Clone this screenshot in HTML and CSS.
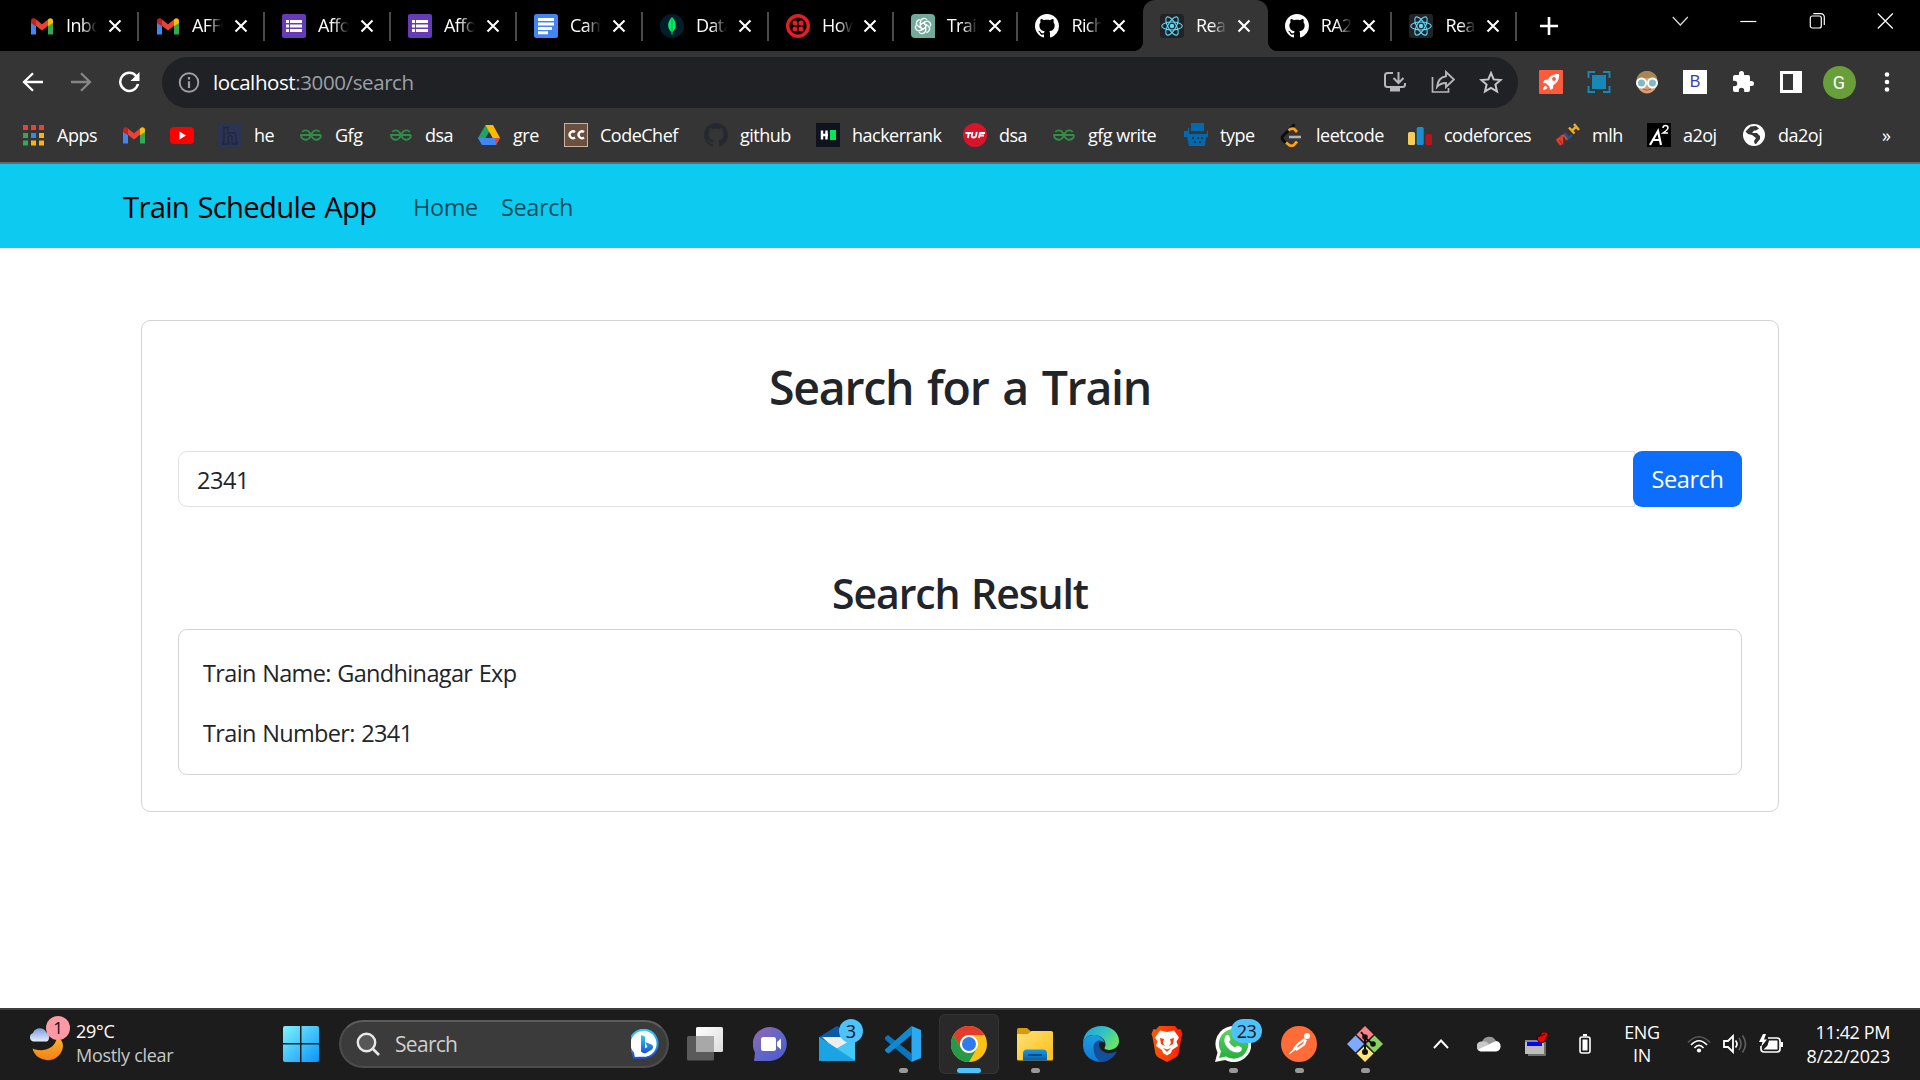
FILE: index.html
```html
<!DOCTYPE html>
<html lang="en">
<head>
<meta charset="utf-8">
<title>React App</title>
<link rel="stylesheet" href="styles.css">
</head>
<body>
<svg class="defs" width="0" height="0">
  <defs>
    <linearGradient id="gStart" x1="0" y1="0" x2="1" y2="1"><stop offset="0" stop-color="#7ef3ff"/><stop offset="1" stop-color="#0a94f8"/></linearGradient>
    <linearGradient id="gMoon" x1="0" y1="0" x2="0" y2="1"><stop offset="0" stop-color="#f9b52a"/><stop offset="1" stop-color="#f08018"/></linearGradient>
    <linearGradient id="gCloud" x1="0" y1="0" x2="0" y2="1"><stop offset="0" stop-color="#7d9bdc"/><stop offset="1" stop-color="#e6edfc"/></linearGradient>
    <linearGradient id="gBing" x1="0" y1="0" x2="0" y2="1"><stop offset="0" stop-color="#2bd0f0"/><stop offset="1" stop-color="#1c50d8"/></linearGradient>
    <linearGradient id="gChat" x1="0" y1="0" x2="1" y2="1"><stop offset="0" stop-color="#9a67ac"/><stop offset=".5" stop-color="#6266c6"/><stop offset="1" stop-color="#4f5ad0"/></linearGradient>
    <linearGradient id="gMail" x1="0" y1="0" x2="1" y2="1"><stop offset="0" stop-color="#2fb5ee"/><stop offset="1" stop-color="#1499e0"/></linearGradient>
    <linearGradient id="gFolder" x1="0" y1="0" x2="1" y2="1"><stop offset="0" stop-color="#ffe07a"/><stop offset="1" stop-color="#fdbf10"/></linearGradient>
    <linearGradient id="gTray" x1="0" y1="0" x2="0" y2="1"><stop offset="0" stop-color="#159be8"/><stop offset="1" stop-color="#0a5cab"/></linearGradient>
    <linearGradient id="gEdgeTop" x1="0" y1="0" x2="1" y2=".5"><stop offset="0" stop-color="#1ea0dc"/><stop offset=".55" stop-color="#31c2c6"/><stop offset="1" stop-color="#66e36a"/></linearGradient>
    <linearGradient id="gEdgeMid" x1="0" y1="0" x2="0" y2="1"><stop offset="0" stop-color="#1b9de2"/><stop offset="1" stop-color="#0f78d6"/></linearGradient>
    <linearGradient id="gBrave" x1="0" y1="0" x2="1" y2="0"><stop offset="0" stop-color="#ff5a08"/><stop offset="1" stop-color="#ff1e00"/></linearGradient>
    <linearGradient id="gWa" x1="0" y1="0" x2="0" y2="1"><stop offset="0" stop-color="#5fd267"/><stop offset="1" stop-color="#27ae3f"/></linearGradient>
    <linearGradient id="gPane" x1="0" y1="0" x2="1" y2="1"><stop offset="0" stop-color="#ffffff"/><stop offset="1" stop-color="#dcdcdc"/></linearGradient>
  </defs>
  <symbol id="gmail" viewBox="0 0 24 24">
    <path fill="#4285f4" d="M1 20.500V8l5 3.800V20.500z"/><path fill="#34a853" d="M18 20.500v-8.700L23 8v12.500z"/>
    <path fill="#ea4335" d="M6 5.500l6 4.700 6-4.700v6.300l-6 4.700-6-4.700z"/>
    <path fill="#fbbc04" d="M18 5.500c2.200-2.200 5-1 5 1.500v2l-5 3.300z"/><path fill="#c5221f" d="M6 5.500C3.800 3.300 1 4.500 1 7v2l5 3.300z"/>
  </symbol>
  <symbol id="forms" viewBox="0 0 24 24">
    <rect width="24" height="24" rx="2" fill="#673ab7"/>
    <g fill="#fff"><rect x="4" y="6" width="3" height="3"/><rect x="8" y="6" width="12" height="3"/><rect x="4" y="10.500" width="3" height="3"/><rect x="8" y="10.500" width="12" height="3"/><rect x="4" y="15" width="3" height="3"/><rect x="8" y="15" width="12" height="3"/></g>
  </symbol>
  <symbol id="docs" viewBox="0 0 24 24">
    <rect width="24" height="24" rx="2.500" fill="#4285f4"/><path fill="#fff" d="M4 4h16v3H4zM4 8.500h16v3H4zM4 13h14v3H4zM4 17.300h10v3H4z"/>
  </symbol>
  <symbol id="mongo" viewBox="0 0 24 24">
    <circle cx="12" cy="12" r="12" fill="#001e2b"/><path fill="#00ed64" d="M12 3c5 5 5 11 .5 15v2.500h-1V18C7 14 7 8 12 3z"/><path stroke="#0a9a48" stroke-width=".8" d="M12 5v13"/>
  </symbol>
  <symbol id="twilio" viewBox="0 0 24 24">
    <circle cx="12" cy="12" r="10.300" fill="#0a0000" stroke="#e31e26" stroke-width="3.400"/><g fill="#e31e26"><circle cx="9" cy="9" r="2.500"/><circle cx="15" cy="9" r="2.500"/><circle cx="9" cy="15" r="2.500"/><circle cx="15" cy="15" r="2.500"/></g>
  </symbol>
  <symbol id="gpt" viewBox="0 0 24 24">
    <path d="M4 0h16a4 4 0 0 1 4 4v20H4a4 4 0 0 1-4-4V4a4 4 0 0 1 4-4z" fill="#74aa9c"/>
    <g fill="none" stroke="#fff" stroke-width="1.300"><path id="gptp" d="M9.400 13.500V8a3.600 3.600 0 0 1 6.600-2M9.400 10.500l4.900-2.900"/><use href="#gptp" transform="rotate(60 12 12)"/><use href="#gptp" transform="rotate(120 12 12)"/><use href="#gptp" transform="rotate(180 12 12)"/><use href="#gptp" transform="rotate(240 12 12)"/><use href="#gptp" transform="rotate(300 12 12)"/></g>
  </symbol>
  <symbol id="github" viewBox="0 0 16 16">
    <path fill="currentColor" d="M8 0C3.580 0 0 3.580 0 8c0 3.540 2.290 6.530 5.470 7.590.4.070.55-.17.55-.38 0-.19-.01-.82-.01-1.490-2.010.37-2.530-.49-2.690-.94-.09-.23-.48-.94-.82-1.130-.28-.15-.68-.52-.01-.53.630-.01 1.080.58 1.230.82.72 1.210 1.870.87 2.330.66.07-.52.28-.87.51-1.070-1.780-.2-3.640-.89-3.640-3.950 0-.87.31-1.590.82-2.150-.08-.2-.36-1.020.08-2.120 0 0 .67-.21 2.200.82.64-.18 1.320-.27 2-.27s1.360.09 2 .27c1.530-1.040 2.200-.82 2.200-.82.44 1.100.16 1.920.08 2.120.51.56.82 1.270.82 2.150 0 3.070-1.870 3.750-3.650 3.950.29.25.54.73.54 1.480 0 1.070-.01 1.930-.01 2.200 0 .21.15.46.55.38A8.010 8.010 0 0 0 16 8c0-4.420-3.580-8-8-8z"/>
  </symbol>
  <symbol id="react" viewBox="0 0 24 24">
    <rect width="24" height="24" rx="3" fill="#222326"/><circle cx="12" cy="12" r="2.200" fill="#61dafb"/>
    <g fill="none" stroke="#61dafb" stroke-width="1.100"><ellipse cx="12" cy="12" rx="10.300" ry="4"/><ellipse cx="12" cy="12" rx="10.300" ry="4" transform="rotate(60 12 12)"/><ellipse cx="12" cy="12" rx="10.300" ry="4" transform="rotate(120 12 12)"/></g>
  </symbol>
  <symbol id="x" viewBox="0 0 14 14"><path d="M1.500 1.500l11 11M12.500 1.500l-11 11" stroke="#fff" stroke-width="2.100" fill="none"/></symbol>
  <symbol id="gfg" viewBox="0 0 24 24">
    <g fill="none" stroke="#2f8d46" stroke-width="1.900"><path d="M3.300 8.800a4.700 4.700 0 1 1-1.300 3.200H22M20.700 8.800a4.700 4.700 0 1 0 1.300 3.200"/></g>
  </symbol>
</svg>

<header class="browser">
  <div class="tabstrip">
    <div class="tab"><svg class="fav"><use href="#gmail"/></svg><span class="tab-title">Inbox</span><svg class="tab-x"><use href="#x"/></svg></div>
    <div class="tab"><svg class="fav"><use href="#gmail"/></svg><span class="tab-title">AFFO</span><svg class="tab-x"><use href="#x"/></svg></div>
    <div class="tab"><svg class="fav"><use href="#forms"/></svg><span class="tab-title">Affor</span><svg class="tab-x"><use href="#x"/></svg></div>
    <div class="tab"><svg class="fav"><use href="#forms"/></svg><span class="tab-title">Affor</span><svg class="tab-x"><use href="#x"/></svg></div>
    <div class="tab"><svg class="fav"><use href="#docs"/></svg><span class="tab-title">Camp</span><svg class="tab-x"><use href="#x"/></svg></div>
    <div class="tab"><svg class="fav"><use href="#mongo"/></svg><span class="tab-title">Data</span><svg class="tab-x"><use href="#x"/></svg></div>
    <div class="tab slim"><svg class="fav"><use href="#twilio"/></svg><span class="tab-title">How</span><svg class="tab-x"><use href="#x"/></svg></div>
    <div class="tab slim"><svg class="fav"><use href="#gpt"/></svg><span class="tab-title">Train</span><svg class="tab-x"><use href="#x"/></svg></div>
    <div class="tab slim plain"><svg class="fav"><use href="#github"/></svg><span class="tab-title">Rich</span><svg class="tab-x"><use href="#x"/></svg></div>
    <div class="tab slim plain active"><svg class="fav"><use href="#react"/></svg><span class="tab-title">Reac</span><svg class="tab-x"><use href="#x"/></svg></div>
    <div class="tab slim"><svg class="fav"><use href="#github"/></svg><span class="tab-title">RA20</span><svg class="tab-x"><use href="#x"/></svg></div>
    <div class="tab slim"><svg class="fav"><use href="#react"/></svg><span class="tab-title">Reac</span><svg class="tab-x"><use href="#x"/></svg></div>
    <div class="new-tab"><svg width="18" height="18" viewBox="0 0 18 18"><path d="M9 0v18M0 9h18" stroke="#fff" stroke-width="2.600"/></svg></div>
    <div class="window-buttons">
      <svg width="16" height="18" viewBox="0 0 16 18"><path d="M.5 5l7.500 8 7.500-8" fill="none" stroke="#ddd" stroke-width="1.200"/></svg>
      <svg width="16" height="18" viewBox="0 0 16 18"><path d="M0 9.500h16" stroke="#fff" stroke-width="1.200"/></svg>
      <svg width="16" height="18" viewBox="0 0 16 18"><rect x="1" y="4" width="11" height="12" rx="2" fill="none" stroke="#fff" stroke-width="1.200"/><path d="M4 1.600h7.500a3.500 3.500 0 0 1 3.500 3.500V13" fill="none" stroke="#fff" stroke-width="1.200"/></svg>
      <svg width="16" height="18" viewBox="0 0 16 18"><path d="M.5 1.500l15 15M15.500 1.500l-15 15" stroke="#fff" stroke-width="1.200"/></svg>
    </div>
  </div>

  <div class="toolbar">
    <div class="cell"><svg width="22" height="20" viewBox="0 0 22 20"><path d="M21 10H2.500M11 1.200L2 10l9 8.800" fill="none" stroke="#fff" stroke-width="2.300"/></svg></div>
    <div class="cell"><svg width="22" height="20" viewBox="0 0 22 20"><path d="M1 10h18.500M11 1.200l9 8.800-9 8.800" fill="none" stroke="#868686" stroke-width="2.300"/></svg></div>
    <div class="cell"><svg width="22" height="22" viewBox="0 0 22 22"><path d="M18.500 5.500A9 9 0 1 0 20 13" fill="none" stroke="#fff" stroke-width="2.500"/><path d="M21.500 1v9h-9z" fill="#fff"/></svg></div>
    <div class="omnibox">
      <svg width="24" height="24" viewBox="0 0 24 24"><circle cx="12" cy="12.500" r="9.300" fill="none" stroke="#9aa0a6" stroke-width="1.900"/><path d="M12 7v2.500M12 11.200V18" stroke="#9aa0a6" stroke-width="2.200"/></svg>
      <div class="url"><b>localhost</b>:3000/search</div>
      <div class="cell"><svg width="24" height="24" viewBox="0 0 24 24"><path d="M10 3H4.500Q2 3 2 5.500v9Q2 17 4.500 17h15q2.500 0 2.500-2.500V13" fill="none" stroke="#b4b7bb" stroke-width="2"/><path d="M7 17h10v4.500H7z" fill="#b4b7bb"/><path d="M15.500 2v10.500M10.500 8l5 5 5-5" fill="none" stroke="#b4b7bb" stroke-width="2"/></svg></div>
      <div class="cell"><svg width="24" height="24" viewBox="0 0 24 24"><path d="M1.500 7v15h16v-4" fill="none" stroke="#b4b7bb" stroke-width="1.700"/><path d="M15 2l8 7.500-8 7.500v-4c-5 0-7 1.500-9 4 .5-6 4-10 9-10.800z" fill="none" stroke="#b4b7bb" stroke-width="1.900"/></svg></div>
      <div class="cell"><svg width="24" height="24" viewBox="0 0 24 24"><path d="M12 3l2.700 6.400 7 .6-5.300 4.600 1.600 6.800-6-3.600-6 3.600 1.600-6.800L2.300 10l7-.6z" fill="none" stroke="#c4c7cb" stroke-width="2"/></svg></div>
    </div>
    <div class="cell"><svg width="24" height="24" viewBox="0 0 24 24"><rect width="24" height="24" rx="1" fill="#ff5a3c"/><path d="M20 4c-6-.3-9 2-11 5.500L5.500 10 4 13l3 .3 3.500 3.500.5 3.200 3-1.500.3-3.600C18 13 20.500 10 20 4z" fill="#fff"/><circle cx="15" cy="9" r="1.900" fill="#ff5a3c"/><path d="M4 20c0-2 1-4 2.500-4.500l2 2C8 19 6 20 4 20z" fill="#fff"/></svg></div>
    <div class="cell"><svg width="24" height="24" viewBox="0 0 24 24"><rect x="5" y="5" width="14" height="14" fill="#1788b8"/><path d="M1.500 8V2H8M16 2h6.500v6M22.500 16v6H16M8 22H1.500v-6" fill="none" stroke="#1788b8" stroke-width="1.900"/></svg></div>
    <div class="cell"><svg width="24" height="24" viewBox="0 0 24 24"><path d="M2 13a10 12 0 0 1 20 0c0 6-5 10.500-10 10.500S2 19 2 13z" fill="#dc9d76"/><path d="M1.500 12C1 5 6 1 12 1s11 4 10.500 11l-3-4.500-8 .5-4 1-4 1z" fill="#a98455"/><g fill="#80b8c8" stroke="#f4ffff" stroke-width="2"><circle cx="6.500" cy="13" r="4.500"/><circle cx="17.500" cy="13" r="4.500"/></g><path d="M8 19q4 2.500 8 0" stroke="#a8593c" fill="none"/></svg></div>
    <div class="cell"><span class="b-ext">B</span></div>
    <div class="cell"><svg width="24" height="24" viewBox="0 0 24 24"><path fill="#fff" d="M20.500 11H19V7a2 2 0 0 0-2-2h-4V3.500a2.500 2.500 0 0 0-5 0V5H4a2 2 0 0 0-2 2v3.800h1.500a2.700 2.700 0 0 1 0 5.400H2V20a2 2 0 0 0 2 2h3.800v-1.500a2.700 2.700 0 0 1 5.400 0V22H17a2 2 0 0 0 2-2v-4h1.500a2.500 2.500 0 0 0 0-5z"/></svg></div>
    <div class="cell"><svg width="22" height="22" viewBox="0 0 22 22"><path fill="#fff" fill-rule="evenodd" d="M0 0h22v22H0zM3 3v16h10V3z"/></svg></div>
    <div class="cell"><span class="avatar">G</span></div>
    <div class="cell"><svg width="6" height="20" viewBox="0 0 6 20"><g fill="#fff"><circle cx="3" cy="2.500" r="2.300"/><circle cx="3" cy="10" r="2.300"/><circle cx="3" cy="17.500" r="2.300"/></g></svg></div>
  </div>

  <nav class="bookmarks">
    <a class="grid-link"><svg viewBox="0 0 24 24"><g fill="#ea4335"><path d="M2 2h5v5H2zM10 2h5v5h-5zM18 2h5v5h-5z"/></g><path fill="#34a853" d="M2 10h5v5H2zM2 17.500h5v5H2z"/><path fill="#2b8df0" d="M10 10h5v5h-5z"/><path fill="#fbb404" d="M18 10h5v5h-5zM10 17.500h5v5h-5zM18 17.500h5v5h-5z"/></svg>Apps</a>
    <a><svg><use href="#gmail"/></svg></a>
    <a><svg viewBox="0 0 24 24"><rect y="4" width="24" height="17" rx="4" fill="#f00"/><path d="M9.500 8.500l6.500 4-6.500 4z" fill="#fff"/></svg></a>
    <a><svg viewBox="0 0 24 24"><rect width="24" height="24" rx="1.500" fill="#2c3454"/><path d="M6 4.500h4v6.500c5-3 8-1 8 3v5h1v2h-5v-7c0-2-3-1.500-4 0v5h1v2H5v-2h1V6.500z" fill="none" stroke="#20263e" stroke-width="1.300"/></svg>he</a>
    <a><svg><use href="#gfg"/></svg>Gfg</a>
    <a><svg><use href="#gfg"/></svg>dsa</a>
    <a><svg viewBox="0 0 24 24"><path fill="#1fa463" d="M8.500 2h4L15 6.500 5.500 22 1 15z"/><path fill="#ffba00" d="M8.500 2H16l7 13h-7.500z"/><path fill="#4285f4" d="M5 15h18l-4 7H5L1 15z"/><path fill="#ea4335" d="M18 15h5l-4 7z"/><path fill="#353535" d="M12 9l3.500 6h-7z"/></svg>gre</a>
    <a><svg viewBox="0 0 24 24"><rect x=".5" y=".5" width="23" height="23" fill="#6b5040" stroke="#c8b4a0"/><path d="M11 9a3.400 3.400 0 1 0 0 5.500M20 9a3.400 3.400 0 1 0 0 5.500" fill="none" stroke="#fff" stroke-width="2.300"/></svg>CodeChef</a>
    <a><svg class="dark"><use href="#github"/></svg>github</a>
    <a><svg viewBox="0 0 24 24"><rect width="24" height="24" fill="#0e141e"/><path d="M6 7.500v9M10.500 7.500v9M5 12h7" stroke="#fff" stroke-width="2.400"/><path d="M14 7h6v10h-6z" fill="#05e65c"/></svg>hackerrank</a>
    <a><svg viewBox="0 0 24 24"><circle cx="12" cy="12" r="12" fill="#d8142c"/><path d="M2.500 10H8M5.800 10l-1 5M9.500 9l-.8 4q0 1.500 2 1.500t2.300-1.500l.8-4M16 15l1-5h5M16.500 12.500H21" fill="none" stroke="#fff" stroke-width="1.800"/></svg>dsa</a>
    <a><svg><use href="#gfg"/></svg>gfg write</a>
    <a><svg viewBox="0 0 24 24"><path fill="#0468ae" d="M7 0h13v8H7zM0 8h4V5h1v6h18V8h1v6h-2l-1 9H5l-2-9H0z"/><path d="M8 14h2v2H8zM13 14h2v2h-2zM17 14h2v2h-2zM10 18h2v2h-2zM15 18h2v2h-2z" fill="#28323a"/></svg>type</a>
    <a><svg viewBox="0 0 24 24"><path d="M14.500 1.500L2.500 13.500q-1 1.500 0 3L6 20" fill="none" stroke="#0c0c0c" stroke-width="2.800"/><path d="M6 19.500l3 2.500q2.500 1.500 5 0l3-3.500M8.500 7.500l2-1.500q2.500-1 4 .3L17 9" fill="none" stroke="#ffa116" stroke-width="2.700"/><path d="M9 14h12" stroke="#b3b3b3" stroke-width="2.600"/></svg>leetcode</a>
    <a><svg viewBox="0 0 24 24"><rect y="9" width="7" height="13" rx="1.500" fill="#f5cd58"/><rect x="8.700" y="4" width="7" height="18" rx="1.500" fill="#1a8ed0"/><rect x="17.500" y="11" width="6.500" height="11" rx="1.500" fill="#b3161f"/></svg>codeforces</a>
    <a><svg viewBox="0 0 24 24"><g fill="none" stroke-width="2.500"><path d="M5 22l-3.500-5 2.500-2 2 3 0-5 2.500-1L11 17" stroke="#e53a2e"/><path d="M8.500 10l4.500 5 3-3" stroke="#1d5190"/><path d="M13 4.500l5.500 6M18 1l5 6M15.500 8l5-4.500" stroke="#f0a92a"/></g></svg>mlh</a>
    <a><svg viewBox="0 0 24 24"><rect width="24" height="24" fill="#000"/><path d="M3 22L11 8l3 14M6 17h7" fill="none" stroke="#fff" stroke-width="2.200"/><path d="M16 5q0-2.500 2.500-2.500T21 5q0 1.500-5 5h5" fill="none" stroke="#fff" stroke-width="1.500"/></svg>a2oj</a>
    <a><svg viewBox="0 0 24 24"><circle cx="12" cy="12" r="11" fill="#fff"/><path d="M3 9l5.500-5.500 5.500-.5 3 2.500-3 2h-2l-2 2.500h5l3 3v3l-4 5-3-.5 1-3-3-3-4-1.500z" fill="#353535"/><path d="M3 8l3 3 4 1 4 3-2 3 1 4-5-1-5-6z" fill="#fff"/></svg>da2oj</a>
    <a class="more">»</a>
  </nav>
</header>

<div class="navbar">
  <a class="brand">Train Schedule App</a>
  <a class="nav-link home">Home</a>
  <a class="nav-link">Search</a>
</div>

<main class="page">
  <section class="card">
    <h2>Search for a Train</h2>
    <div class="search-row">
      <div class="search-input">2341</div>
      <div class="search-button">Search</div>
    </div>
    <h3>Search Result</h3>
    <div class="result">
      <p>Train Name: Gandhinagar Exp</p>
      <p>Train Number: 2341</p>
    </div>
  </section>
</main>

<footer class="taskbar">
  <div class="weather">
    <svg width="42" height="42" viewBox="0 0 42 42"><path d="M29 15c4 2 6 5 6 9a15.500 15.500 0 0 1-30.500 2.500C12 30 27 29 29 15z" fill="url(#gMoon)"/><path d="M5 19.500a4.500 4.500 0 0 1 0-8.500c2-6 11-6 13-1 4 2 4 8 1 9.500z" fill="url(#gCloud)"/></svg>
    <span class="count pink">1</span>
    <div class="weather-text"><span>29°C</span><span class="cond">Mostly clear</span></div>
  </div>
  <div class="start"><svg width="36" height="36" viewBox="0 0 36 36"><path fill="url(#gStart)" d="M2 0h15v17H0V2q0-2 2-2zM18.500 0H34q2 0 2 2v15H18.500zM0 18.500h17V36H2q-2 0-2-2zM18.500 18.500H36V34q0 2-2 2H18.500z"/></svg></div>
  <div class="task-search">
    <svg width="24" height="24" viewBox="0 0 24 24"><circle cx="10.500" cy="10.500" r="8.700" fill="#575757" stroke="#e8e8e8" stroke-width="2.400"/><path d="M17 17l6 6" stroke="#e8e8e8" stroke-width="2.700"/></svg>
    <span>Search</span>
    <svg class="bing" width="30" height="30" viewBox="0 0 30 30"><path d="M3 29l-1-5A14 14 0 1 1 15.500 28.500z" fill="#fff" stroke="url(#gBing)" stroke-width="2"/><path d="M10 6l4 1.500V20l-4 2.500zM10 22.500l4.500-3.500 2-1-2.500-5 6.500 2.500q3 2 .5 5L15 24q-3 1-5-1.500z" fill="url(#gBing)"/></svg>
  </div>
  <div class="apps">
    <div class="app"><svg viewBox="0 0 36 36"><rect x="9" y="1" width="27" height="25" rx="1.500" fill="url(#gPane)"/><rect y="10" width="27" height="24.500" rx="1.500" fill="#5a5a5a"/><path d="M9 10h18v16H9z" fill="#a8a8a8"/></svg></div>
    <div class="app"><svg viewBox="0 0 36 36"><path d="M1 35l1-8.500A17 17 0 1 1 17.500 35z" fill="url(#gChat)"/><rect x="8" y="11" width="15" height="14" rx="2.500" fill="#fff"/><path d="M24 16l4-3.500v11L24 20z" fill="#fff"/></svg></div>
    <div class="app"><svg viewBox="0 0 36 36"><path d="M0 11L18 0l18 11v10H0z" fill="#0a58a8"/><path d="M3 11h30v8L18 25z" fill="#eee"/><path d="M0 11l18 11.500L36 12v22.500H0z" fill="url(#gMail)"/><path d="M0 34.500L18 22.500 36 12v22.500z" fill="#45c8f5"/><path d="M0 11l36 23.500H0z" fill="#1aa3e5"/></svg><span class="count">3</span></div>
    <div class="app run"><svg viewBox="0 0 36 36"><path d="M0 13q-.5-1.500 1-2.500l2-1.500 23.500 18.500V36L1 14.500z" fill="#0a74bd"/><path d="M0 23.500L26.500 0v9L3.500 27.500 1 26q-1-1-1-2.500z" fill="#1089d2"/><path d="M26.500 0L36 4v28l-9.500 4z" fill="#2ba9f2"/></svg></div>
    <div class="app current"><svg viewBox="0 0 36 36"><circle cx="18" cy="18" r="18" fill="#fbc116"/><path d="M2.400 9A18 18 0 0 1 33.600 9H18a9 9 0 0 0-7.800 13.500z" fill="#e33b2e"/><path d="M2.400 9A18 18 0 0 0 18 36l7.800-13.500a9 9 0 0 1-15.600 0z" fill="#259a48"/><circle cx="18" cy="18" r="9" fill="#fff"/><circle cx="18" cy="18" r="7" fill="#2f7bed"/></svg></div>
    <div class="app run"><svg viewBox="0 0 36 36"><path d="M0 3.500Q0 2 1.500 2H10l4 3.500V12H0z" fill="#dd9a07"/><path d="M0 8h11l3.500-3H34q2 0 2 1.500V33q0 1.500-1.500 1.500h-33Q0 34.500 0 33z" fill="url(#gFolder)"/><path d="M6 34.500v-7q0-4 4-4h16q4 0 4 4v7z" fill="url(#gTray)"/><path d="M11 29h14" stroke="#084a84" stroke-width="2"/></svg></div>
    <div class="app"><svg viewBox="0 0 36 36"><path d="M0 18C0 6 9 0 18 0c11 0 18 7 18 15 0 7-7 10-13 8.500-3-1-.5-2-.5-5C22.500 13 17 9 11 9 5 9 1 12 0 18z" fill="url(#gEdgeTop)"/><path d="M0 19C0 12 6 8.500 12 9c5 .5 9 4 9.500 8C19 14 14 15 14 21c0 8 7 12 13 12-12 7-27 0-27-14z" fill="url(#gEdgeMid)"/><path d="M10.500 22c0-5 3-7.500 7-8-2 2-2 6 0 9 4 5 10 5 15.500 2.500q1 0 .5 1C29 34 22 36 19 36c-5-1-8.500-8-8.500-14z" fill="#144f9c"/></svg></div>
    <div class="app"><svg viewBox="0 0 36 36"><path d="M10 0h16l3 3.500 2.500-.5 2 5-1 3-3 17q-1 2-3 3.500L18 36l-8.500-4.500q-2-1.500-3-3.500l-3-17-1-3 2-5 2.500.5z" fill="url(#gBrave)"/><path d="M18 6l7-1.500 5 7-2.500 4L29 20l-6 4-1 3-4 2.500-4-2.500-1-3-6-4 1.500-4.500L6 11.500l5-7z" fill="#fff"/><path d="M11 12l4 1-1 4 2 3-4-2zM25 12l-4 1 1 4-2 3 4-2zM14 22l4 1.500 4-1.500-4 4z" fill="#ff3c04"/></svg></div>
    <div class="app run"><svg viewBox="0 0 36 36"><path d="M0 36l2.500-9.500A18 18 0 1 1 10 34z" fill="#fff"/><path d="M4 32l2-6.500A14.800 14.800 0 1 1 11 30.500z" fill="url(#gWa)"/><path d="M11 9.500q2-1.500 3 0l1.500 4-1.500 2.500q2 4 6 5.500l2.500-2 4 2q1 3-2 4.500C17 29 5 17 11 9.500z" fill="#fff"/></svg><span class="count wide">23</span></div>
    <div class="app run"><svg viewBox="0 0 36 36"><circle cx="18" cy="18" r="18" fill="#ff6c37"/><circle cx="26" cy="10" r="3" fill="#fff"/><path d="M24 13L17 18l-4 5M25 13.500l-2 5-8 5.500" fill="none" stroke="#fff" stroke-width="2.200"/><path d="M8 28l7-7 1.500 1z" fill="#fff" stroke="#fff"/></svg></div>
    <div class="app run"><svg viewBox="0 0 36 36"><path d="M18 0l8.500 8.500-8.500 8-8.500-8z" fill="#ff8086"/><path d="M27.500 9.500L36 18l-8.500 8.500-8.500-8.500z" fill="#8ad25e"/><path d="M8.500 9.500L17 18l-8.500 8.500L0 18z" fill="#7dabff"/><path d="M18 19.500l8.500 8-8.500 8.500-8.500-8.500z" fill="#ffe778"/><path d="M14 6l4 5v15M18 12l8 6" stroke="#111" stroke-width="2" fill="none"/><g fill="#111"><circle cx="18" cy="11" r="2.800"/><circle cx="26" cy="18" r="2.800"/><circle cx="18" cy="26" r="3"/></g></svg></div>
  </div>
  <div class="tray">
    <svg width="16" height="10" viewBox="0 0 16 10"><path d="M1 9l7-7.500L15 9" fill="none" stroke="#fff" stroke-width="2"/></svg>
    <svg class="t-cloud" width="24" height="16" viewBox="0 0 24 16"><path d="M5 6a7.500 7.500 0 0 1 14-1l-7 5z" fill="#979797"/><path d="M5 15.500a5 5 0 0 1-1-10q4-1 8 2L5 14z" fill="#c8c8c8"/><path d="M19 5a5.300 5.300 0 0 1 0 10.500H5q-2.500 0-4-2z" fill="#fff"/></svg>
    <svg class="t-disk" width="24" height="24" viewBox="0 0 24 24"><path d="M0 8h19v14H0z" fill="#bdbdbd"/><path d="M2 10h15v4H2z" fill="#0505f8"/><path d="M0 8h17v2H0z" fill="#888"/><path d="M3 23h17V10" fill="none" stroke="#888" stroke-width="1.500"/><path d="M12 7q0-3 3-3l2-4h5q2 2 0 5l-3 5q-3 2-5 0z" fill="#e90505" stroke="#300"/><path d="M16 4l4-2" stroke="#300"/></svg>
    <svg class="t-batt" width="12" height="20" viewBox="0 0 12 20"><rect x="1" y="3" width="10" height="16" rx="2" fill="#1c1c1c" stroke="#fff" stroke-width="1.600"/><path d="M3.500 5.500h5v11h-5zM4 0h4v2H4z" fill="#fff"/></svg>
    <div class="lang"><span>ENG</span><span>IN</span></div>
    <svg class="t-wifi" width="24" height="18" viewBox="0 0 24 18"><g fill="none" stroke-width="1.700"><path d="M1 7.500Q12-4 23 7.500" stroke="#5a5a5a"/><path d="M4 10Q12 1.500 20 10M7.500 13Q12 7.800 16.500 13" stroke="#fff"/></g><circle cx="12" cy="15.500" r="2.100" fill="#fff"/></svg>
    <svg class="t-vol" width="24" height="20" viewBox="0 0 24 20"><path d="M1 7h4l5-5v16l-5-5H1z" fill="none" stroke="#fff" stroke-width="1.800"/><path d="M12.500 6.500q3 3.500 0 7" fill="none" stroke="#fff" stroke-width="1.700"/><path d="M16 4q4 6 0 12M19.500 1.500q6 8.500 0 17" fill="none" stroke="#606060" stroke-width="1.600"/></svg>
    <svg class="t-pow" width="24" height="20" viewBox="0 0 24 20"><path d="M9 4h9q3 0 3 3v8q0 3-3 3H5q-3 0-3-3v-3" fill="none" stroke="#fff" stroke-width="1.700"/><path d="M10 6.500h8.500v9H4.500l4-4z" fill="#fff"/><path d="M21.500 8H24v5h-2.500z" fill="#fff"/><path d="M4 0L0 8h3.500L2 13l6-7.500H5L7 0z" fill="#fff"/></svg>
    <div class="clock"><span>11:42 PM</span><span class="date">8/22/2023</span></div>
  </div>
</footer>
</body>
</html>
```
FILE: styles.css
```css
* { box-sizing: border-box; }
body {
  margin: 0; width: 1920px; height: 1080px; overflow: hidden;
  display: flex; flex-direction: column; background: #fff;
  font-family: "Open Sans", "Noto Sans", sans-serif; font-size: 18px; color: #fff;
}
svg { display: block; flex: none; }
.defs { position: absolute; }
h2, h3, p { margin: 0; }

/* Browser chrome */
.browser { height: 164px; flex: none; background: #353535; border-bottom: 2px solid #666; }
.tabstrip { height: 51px; background: #000; display: flex; padding-left: 13px; }
.tab { width: 126px; flex: none; height: 51px; display: flex; align-items: center; padding-left: 17px; background: linear-gradient(#4a4a4a, #4a4a4a) no-repeat right 12px / 2px 29px; }
.tab.slim { width: 124.700px; }
.tab.plain { background: none; }
.tab.active { background: #353535; border-radius: 12px 12px 0 0; position: relative; }
.tab.active::before, .tab.active::after { content: ""; position: absolute; bottom: 0; width: 10px; height: 10px; }
.tab.active::before { left: -10px; background: radial-gradient(circle at 0 0, transparent 10px, #353535 10.500px); }
.tab.active::after { right: -10px; background: radial-gradient(circle at 100% 0, transparent 10px, #353535 10.500px); }
.fav { width: 24px; height: 24px; margin-top: 1px; }
.tab-title { margin: -2px 0 0 12px; width: 31px; overflow: hidden; white-space: nowrap; letter-spacing: -.6px; -webkit-mask-image: linear-gradient(to right, #000 50%, transparent); mask-image: linear-gradient(to right, #000 50%, transparent); }
.tab-x { width: 14px; height: 14px; margin-left: 11px; }
.slim .tab-x { margin-left: 10px; }
.new-tab { width: 64px; display: flex; align-items: center; justify-content: center; }
.window-buttons { margin-left: auto; display: flex; height: 43px; }
.window-buttons svg { width: 68.600px; height: 18px; margin-top: 12px; }

.toolbar { display: flex; align-items: center; height: 62px; padding-left: 9px; }
.cell { width: 48px; flex: none; display: flex; align-items: center; justify-content: center; }
.omnibox { width: 1356px; height: 51px; margin: 0 9px; padding: 0 3px 0 15px; border-radius: 26px; background: #202124; display: flex; align-items: center; }
.url { flex: 1; margin-left: 12px; font-size: 20.500px; letter-spacing: -.4px; color: #9aa0a6; }
.url b { font-weight: 400; color: #fff; }
.b-ext { width: 24px; height: 24px; background: #fff; color: #3b3bb0; font: 16px/24px "Liberation Sans", sans-serif; text-align: center; }
.avatar { width: 33px; height: 33px; border-radius: 50%; background: #689f38; font: 18px/33px Roboto, sans-serif; text-align: center; }

.bookmarks { height: 43px; padding-left: 22px; display: grid; align-items: center; grid-template-columns: 100px 48px 48px 81px 90px 88px 87px 140px 112px 147px 89px 132px 96px 128px 148px 91px 95px 140px 30px; }
.bookmarks a { display: flex; align-items: center; gap: 12px; white-space: nowrap; letter-spacing: -.5px; line-height: 24px; }
.bookmarks .grid-link { margin-left: -1px; }
.bookmarks svg { width: 24px; height: 24px; }
.bookmarks .dark { color: #24292f; }

/* Site */
.navbar { height: 84px; flex: none; background: #0dcaf0; display: flex; align-items: center; padding: 1px 0 0 123px; font-size: 23.500px; }
.brand { color: #000; font-size: 29.200px; width: 290px; letter-spacing: -.68px; word-spacing: 1.500px; white-space: nowrap; }
.nav-link { color: rgba(0, 0, 0, .65); letter-spacing: -.4px; }
.home { width: 88px; }
.page { flex: 1; padding: 72px 141px 0; color: #212529; font-size: 23.500px; line-height: 36px; }
.card { height: 492px; border: 1px solid #d3d4d5; border-radius: 9px; padding: 37px 36px 36px; display: flex; flex-direction: column; }
.card h2 { font-size: 46.500px; line-height: 58px; margin-bottom: 35px; font-weight: 600; text-align: center; letter-spacing: -1.300px; word-spacing: 3px; }
.search-row { display: flex; height: 56px; }
.search-input { flex: 1; border: 1px solid #dee2e6; border-radius: 9px 0 0 9px; padding: 10px 18px 8px; letter-spacing: -.4px; }
.search-button { width: 109px; margin-left: -2px; border-radius: 9px; background: #0d6efd; color: #fff; text-align: center; line-height: 57px; letter-spacing: -.4px; }
.card h3 { margin: 61px 0 11px; font-size: 41px; line-height: 50px; font-weight: 600; text-align: center; letter-spacing: -1.100px; word-spacing: 2px; }
.result { height: 146px; border: 1px solid #d3d4d5; border-radius: 9px; padding: 25px 24px 23px; display: flex; flex-direction: column; gap: 24px; letter-spacing: -.65px; word-spacing: 1px; }

/* Taskbar */
.taskbar { height: 72px; flex: none; background: #1c1c1c; border-top: 2px solid #3e3e3e; padding-bottom: 2px; display: flex; align-items: center; }
.weather { width: 283px; height: 70px; display: flex; padding: 13px 0 0 28px; position: relative; }
.weather-text { display: flex; flex-direction: column; line-height: 24px; margin-top: -3px; margin-left: 6px; letter-spacing: -.3px; }
.cond { color: #c8c8c8; }
.count { position: absolute; width: 24px; height: 24px; border-radius: 12px; background: #4cc2ff; color: #111; font-size: 17px; line-height: 24px; text-align: center; }
.pink { left: 46px; top: 7px; background: #ff99a4; }
.start { width: 56px; }
.task-search { width: 330px; height: 48px; border-radius: 24px; background: #3b3b3b; border: 2px solid #4c4c4c; border-top-color: #5c5c5c; display: flex; align-items: center; padding: 0 6px 0 15px; font-size: 21px; color: #cfcfcf; }
.task-search span { margin-left: 15px; letter-spacing: -.7px; }
.bing { margin-left: auto; }
.apps { display: flex; gap: 6px; margin-left: 6px; }
.app { width: 60px; height: 60px; position: relative; display: flex; align-items: center; justify-content: center; border-radius: 6px; }
.app > svg { width: 36px; height: 36px; }
.app .count { left: 32px; top: 5px; font-size: 18px; }
.app .wide { width: 31px; left: 28px; letter-spacing: -.5px; }
.run::after, .current::after { content: ""; position: absolute; left: 25.500px; bottom: 1px; width: 9px; height: 5px; border-radius: 3px; background: #999; }
.current { background: #292929; box-shadow: inset 0 0 0 1px #343434; }
.current::after { left: 18px; width: 24px; background: #4cc2ff; }
.tray { display: flex; align-items: center; margin-left: 38px; letter-spacing: -.4px; }
.t-cloud { margin-left: 28px; }
.t-disk { margin-left: 24px; }
.t-batt { margin-left: 30px; }
.lang { width: 48px; margin-left: 27px; display: flex; flex-direction: column; text-align: center; line-height: 23px; }
.t-wifi { margin-left: 21px; }
.t-vol, .t-pow { margin-left: 12px; }
.clock { width: 107px; display: flex; flex-direction: column; text-align: right; line-height: 24px; }
.date { letter-spacing: -.2px; }
```
